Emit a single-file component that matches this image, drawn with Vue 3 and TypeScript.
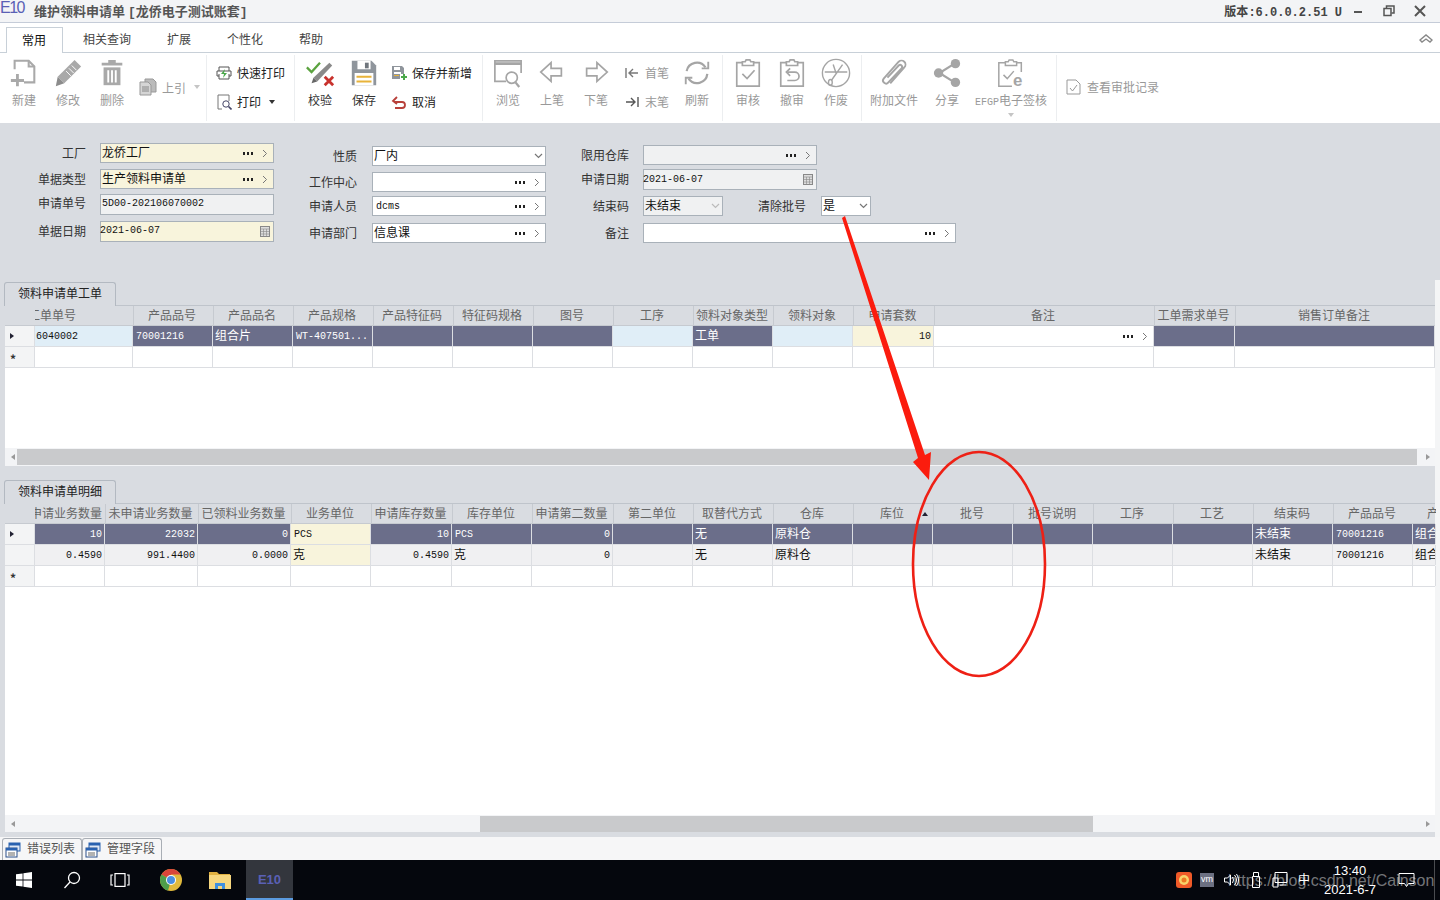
<script setup lang="ts">
interface Field {
  label: string
  value?: string
  tone: 'yellow' | 'white' | 'gray'
  kind?: 'lookup' | 'date' | 'select'
  mono?: boolean
  width: number
  labelWidth: number
}

interface Cell {
  text?: string
  cls?: string
}

interface Column {
  title: string
  w: number
  indent?: number
  sort?: boolean
}

interface Grid {
  name: string
  cls: string
  columns: Column[]
  rows: { head: string; cls: string; cells: Cell[] }[]
}

const formCols: { cls: string; rows: Field[][] }[] = [
  {
    cls: 'col-a',
    rows: [
      [{ label: '工厂', value: '龙侨工厂', tone: 'yellow', kind: 'lookup', width: 174, labelWidth: 66 }],
      [{ label: '单据类型', value: '生产领料申请单', tone: 'yellow', kind: 'lookup', width: 174, labelWidth: 66 }],
      [{ label: '申请单号', value: '5D00-202106070002', tone: 'gray', mono: true, width: 174, labelWidth: 66 }],
      [{ label: '单据日期', value: '2021-06-07', tone: 'yellow', kind: 'date', mono: true, width: 174, labelWidth: 66 }],
    ],
  },
  {
    cls: 'col-b',
    rows: [
      [{ label: '性质', value: '厂内', tone: 'white', kind: 'select', width: 174, labelWidth: 71 }],
      [{ label: '工作中心', tone: 'white', kind: 'lookup', width: 174, labelWidth: 71 }],
      [{ label: '申请人员', value: 'dcms', tone: 'white', kind: 'lookup', mono: true, width: 174, labelWidth: 71 }],
      [{ label: '申请部门', value: '信息课', tone: 'white', kind: 'lookup', width: 174, labelWidth: 71 }],
    ],
  },
  {
    cls: 'col-c',
    rows: [
      [{ label: '限用仓库', tone: 'gray', kind: 'lookup', width: 174, labelWidth: 69 }],
      [{ label: '申请日期', value: '2021-06-07', tone: 'gray', kind: 'date', mono: true, width: 174, labelWidth: 69 }],
      [
        { label: '结束码', value: '未结束', tone: 'gray', kind: 'select', width: 80, labelWidth: 69 },
        { label: '清除批号', value: '是', tone: 'white', kind: 'select', width: 50, labelWidth: 83 },
      ],
      [{ label: '备注', tone: 'white', kind: 'lookup', width: 313, labelWidth: 69 }],
    ],
  },
]

const m = 'mono'
const grids: Grid[] = [
  {
    name: '领料申请单工单',
    cls: 'grid-top',
    columns: [
      { title: '工单单号', w: 98, indent: -7 },
      { title: '产品品号', w: 80 },
      { title: '产品品名', w: 80 },
      { title: '产品规格', w: 80 },
      { title: '产品特征码', w: 80 },
      { title: '特征码规格', w: 80 },
      { title: '图号', w: 80 },
      { title: '工序', w: 80 },
      { title: '领料对象类型', w: 80 },
      { title: '领料对象', w: 80 },
      { title: '申请套数', w: 81 },
      { title: '备注', w: 220 },
      { title: '工单需求单号', w: 81 },
      { title: '销售订单备注', w: 200 },
    ],
    rows: [
      {
        head: 'arrow',
        cls: 'selected',
        cells: [
          { text: '6040002', cls: `${m} blue tight` },
          { text: '70001216', cls: m },
          { text: '组合片' },
          { text: 'WT-407501...', cls: m },
          {},
          {},
          {},
          { cls: 'blue' },
          { text: '工单' },
          { cls: 'blue' },
          { text: '10', cls: `${m} right yellow` },
          { cls: 'white lookup' },
          {},
          {},
        ],
      },
      { head: 'star', cls: '', cells: Array.from({ length: 14 }, () => ({})) },
    ],
  },
  {
    name: '领料申请单明细',
    cls: 'grid-bottom',
    columns: [
      { title: '申请业务数量', w: 70, indent: -5 },
      { title: '未申请业务数量', w: 93 },
      { title: '已领料业务数量', w: 93 },
      { title: '业务单位', w: 80 },
      { title: '申请库存数量', w: 81 },
      { title: '库存单位', w: 80 },
      { title: '申请第二数量', w: 81 },
      { title: '第二单位', w: 80 },
      { title: '取替代方式', w: 80 },
      { title: '仓库', w: 80 },
      { title: '库位', w: 80, sort: true },
      { title: '批号', w: 80 },
      { title: '批号说明', w: 80 },
      { title: '工序', w: 80 },
      { title: '工艺', w: 80 },
      { title: '结束码', w: 80 },
      { title: '产品品号', w: 80 },
      { title: '产品品名', w: 23, indent: 14 },
    ],
    rows: [
      {
        head: 'arrow',
        cls: 'selected',
        cells: [
          { text: '10', cls: `${m} right` },
          { text: '22032', cls: `${m} right` },
          { text: '0', cls: `${m} right` },
          { text: 'PCS', cls: `${m} yellow` },
          { text: '10', cls: `${m} right` },
          { text: 'PCS', cls: m },
          { text: '0', cls: `${m} right` },
          {},
          { text: '无' },
          { text: '原料仓' },
          {},
          {},
          {},
          {},
          {},
          { text: '未结束' },
          { text: '70001216', cls: m },
          { text: '组合片' },
        ],
      },
      {
        head: '',
        cls: 'alt',
        cells: [
          { text: '0.4590', cls: `${m} right` },
          { text: '991.4400', cls: `${m} right` },
          { text: '0.0000', cls: `${m} right` },
          { text: '克', cls: 'yellow' },
          { text: '0.4590', cls: `${m} right` },
          { text: '克' },
          { text: '0', cls: `${m} right` },
          {},
          { text: '无' },
          { text: '原料仓' },
          {},
          {},
          {},
          {},
          {},
          { text: '未结束' },
          { text: '70001216', cls: m },
          { text: '组合片' },
        ],
      },
      { head: 'star', cls: '', cells: Array.from({ length: 18 }, () => ({})) },
    ],
  },
]

const menuTabs = ['相关查询', '扩展', '个性化', '帮助']
</script>

<template>
  <div class="app">
    <!-- 标题栏 -->
    <header class="titlebar">
      <span class="logo">E10</span>
      <span class="doc-title">维护领料申请单 <i>[</i>龙侨电子测试账套<i>]</i></span>
      <span class="version">版本<i>:6.0.0.2.51 U</i></span>
      <div class="win-btns">
        <svg width="11" height="11" viewBox="0 0 11 11"><path d="M1 6h8" stroke="#555" stroke-width="2" /></svg>
        <svg width="12" height="12" viewBox="0 0 12 12" fill="none" stroke="#555" stroke-width="1.5"><rect x="1" y="3.5" width="7" height="7" /><path d="M3.5 3V1H11v7H8.5" /></svg>
        <svg width="12" height="12" viewBox="0 0 12 12"><path d="M1 1l10 10M11 1L1 11" stroke="#555" stroke-width="2" /></svg>
      </div>
    </header>

    <nav class="menubar">
      <span class="menu-tab active">常用</span>
      <span v-for="tab in menuTabs" :key="tab" class="menu-tab">{{ tab }}</span>
      <svg class="collapse" width="14" height="10" viewBox="0 0 14 10" fill="none" stroke="#888" stroke-width="1.4"><path d="M1 7l6-5 6 5-2 2-4-3-4 3z" /></svg>
    </nav>

    <!-- 功能区 -->
    <section class="ribbon">
      <div class="group g1">
        <div class="big off">
          <svg viewBox="0 0 32 32" fill="none" stroke="#a9a9a9" stroke-width="2.2"><path d="M6 12V3h15l6 6v17H16" /><path d="M21 3v6h6" /><path d="M9 17v13M2 24h14" stroke-width="3" /></svg>
          <span>新建</span>
        </div>
        <div class="big off">
          <svg viewBox="0 0 32 32"><path d="M23 2l7 7L12 27l-7-7z" fill="#a9a9a9" /><path d="M20 8l5 5M17 11l5 5M14 14l5 5" stroke="#fff" stroke-width="1" /><path d="M5 20l7 7-9 3z" fill="#8c8c8c" /></svg>
          <span>修改</span>
        </div>
        <div class="big off">
          <svg viewBox="0 0 32 32"><path d="M5 5h22v3H5zM12 2h8v3h-8z" fill="#a9a9a9" /><path d="M7 10h18v19H7z" fill="#a9a9a9" /><path d="M12 13v13M16 13v13M20 13v13" stroke="#fff" stroke-width="2" /></svg>
          <span>删除</span>
        </div>
        <div class="quote off">
          <svg width="18" height="18" viewBox="0 0 18 18"><path d="M6 1h8l3 3v10H6z" fill="#bbb" stroke="#999" /><path d="M1 4h8l3 3v10H1z" fill="#d5d5d5" stroke="#999" /><path d="M3 9h7M3 11h7M3 13h7" stroke="#888" /></svg>
          <span>上引</span>
          <i class="caret pale"></i>
        </div>
      </div>

      <div class="group g2">
        <div class="small">
          <svg viewBox="0 0 16 16" fill="none" stroke="#555"><path d="M3 6V2h10v4M3 11H1V6h14v5h-2M3 9v5h10V9" /><path d="M9 4L5 9h3l-1 4 4-5H8z" fill="#4aa84a" stroke="none" /></svg>
          <span>快速打印</span>
        </div>
        <div class="small">
          <svg viewBox="0 0 16 16" fill="none" stroke="#777"><path d="M6 15H2V1h11v6" /><circle cx="10" cy="10" r="3.2" stroke="#446" /><path d="M12.5 12.5l3 3" stroke="#446" stroke-width="1.6" /></svg>
          <span>打印</span>
          <i class="caret"></i>
        </div>
      </div>

      <div class="group g3">
        <div class="big">
          <svg viewBox="0 0 32 32" fill="none"><path d="M26 5l3 3-16 17-4-4z" fill="#8a8a8a" /><path d="M9 21l4 4-6 2z" fill="#666" /><path d="M2 10l5 5 9-10" stroke="#5ba33f" stroke-width="2.4" /><path d="M21 20l9 9M30 20l-9 9" stroke="#c8322d" stroke-width="3" /></svg>
          <span>校验</span>
        </div>
        <div class="big">
          <svg viewBox="0 0 32 32"><path d="M3 3h21l5 5v21H3z" fill="#8f959c" /><path d="M9 3h14v9H9z" fill="#fff" /><path d="M17 5h4v6h-4z" fill="#70767d" /><path d="M6 16h20v13H6z" fill="#fff" /><path d="M8 19h16v2H8zM8 24h16v2H8z" fill="#e8b33a" /></svg>
          <span>保存</span>
        </div>
        <div class="small-col">
          <div class="small">
            <svg viewBox="0 0 16 16"><path d="M1 1h10l2 2v6H9v5H1z" fill="#8f959c" /><path d="M3 2h6v3H3zM3 7h7v2H3z" fill="#fff" /><path d="M3 10h5v1H3z" fill="#e8b33a" /><path d="M10 12h6M13 9v6" stroke="#4aa84a" stroke-width="2" /></svg>
            <span>保存并新增</span>
          </div>
          <div class="small">
            <svg viewBox="0 0 16 16" fill="none" stroke="#b8403a" stroke-width="1.8"><path d="M3 8h8a3 3 0 0 1 0 6H4" /><path d="M6 3L2 7l4 3" /></svg>
            <span>取消</span>
          </div>
        </div>
      </div>

      <div class="group g4">
        <div class="big off">
          <svg viewBox="0 0 32 32" fill="none" stroke="#a5a5a5" stroke-width="1.8"><path d="M14 25H2V3h28v13" /><path d="M2 6h28" stroke-width="3" /><circle cx="20" cy="21" r="6" /><path d="M24 26l4 5" stroke-width="2.4" /></svg>
          <span>浏览</span>
        </div>
        <div class="big off">
          <svg viewBox="0 0 32 32" fill="none" stroke="#a5a5a5" stroke-width="1.8"><path d="M15 5L4 15l11 10v-6h11v-8H15z" /></svg>
          <span>上笔</span>
        </div>
        <div class="big off">
          <svg viewBox="0 0 32 32" fill="none" stroke="#a5a5a5" stroke-width="1.8"><path d="M17 5l11 10-11 10v-6H6v-8h11z" /></svg>
          <span>下笔</span>
        </div>
        <div class="small-col nav off">
          <div class="small">
            <svg viewBox="0 0 16 16" fill="none" stroke="#777" stroke-width="1.4"><path d="M2 3v10M14 8H6M9 4L5 8l4 4" /></svg>
            <span>首笔</span>
          </div>
          <div class="small">
            <svg viewBox="0 0 16 16" fill="none" stroke="#555" stroke-width="1.4"><path d="M14 3v10M2 8h8M7 4l4 4-4 4" /></svg>
            <span>末笔</span>
          </div>
        </div>
        <div class="big off">
          <svg viewBox="0 0 32 32" fill="none" stroke="#a5a5a5" stroke-width="2.4"><path d="M5 14a11 11 0 0 1 20-4" /><path d="M27 17a11 11 0 0 1-20 5" /><path d="M21 11h7V4M11 21H4v7" stroke-width="2" /></svg>
          <span>刷新</span>
        </div>
      </div>

      <div class="group g5">
        <div class="big off">
          <svg viewBox="0 0 32 32" fill="none" stroke="#a5a5a5" stroke-width="1.8"><path d="M10 5H4v25h24V5h-6" /><path d="M10 8V4h3l1-2h4l1 2h3v4z" /><path d="M10 17l5 5 8-9" /></svg>
          <span>审核</span>
        </div>
        <div class="big off">
          <svg viewBox="0 0 32 32" fill="none" stroke="#a5a5a5" stroke-width="1.8"><path d="M10 5H4v25h24V5h-6" /><path d="M10 8V4h3l1-2h4l1 2h3v4z" /><path d="M11 15h8a4 4 0 0 1 0 9h-8" /><path d="M14 11l-4 4 4 4" /></svg>
          <span>撤审</span>
        </div>
        <div class="big off">
          <svg viewBox="0 0 32 32" fill="none" stroke="#a5a5a5" stroke-width="1.5"><circle cx="16" cy="16" r="14.5" /><path d="M4 15h24M23 7L11 24M13 7l3 9" /><ellipse cx="10" cy="26" rx="2" ry="3" /></svg>
          <span>作废</span>
        </div>
      </div>

      <div class="group g6">
        <div class="big wide-a off">
          <svg viewBox="0 0 32 32" fill="none" stroke="#a5a5a5" stroke-width="2"><path d="M12 27L27 10a4 4 0 0 0-6-6L5 22a3 3 0 0 0 5 4L24 11a2 2 0 0 0-3-3L9 21" /></svg>
          <span>附加文件</span>
        </div>
        <div class="big wide-b off">
          <svg viewBox="0 0 32 32" fill="#a5a5a5"><path d="M24 6L8 16l16 10" fill="none" stroke="#a5a5a5" stroke-width="2.4" /><circle cx="25" cy="6" r="5" /><circle cx="7" cy="16" r="5" /><circle cx="25" cy="26" r="5" /></svg>
          <span>分享</span>
        </div>
        <div class="big wide-c off">
          <svg class="efgp-icon" viewBox="0 0 32 32" fill="none" stroke="#a5a5a5" stroke-width="1.6"><path d="M10 5H3v25h14M22 5h5v10" /><path d="M10 8V4h3l1-2h4l1 2h3v4z" /><path d="M8 18l4 4 7-8" /><text x="18" y="30" class="efgp-e">e</text></svg>
          <span><em>EFGP</em>电子签核</span>
          <i class="caret pale tiny"></i>
        </div>
      </div>

      <div class="group g7 off">
        <svg width="15" height="16" viewBox="0 0 15 16" fill="none" stroke="#999"><path d="M1 1h9l4 4v10H1z" /><path d="M4 9l2.5 3L11 6" /></svg>
        <span>查看审批记录</span>
      </div>
    </section>

    <!-- 单头表单 -->
    <section class="form">
      <div v-for="col in formCols" :key="col.cls" class="form-col" :class="col.cls">
        <div v-for="(row, ri) in col.rows" :key="ri" class="form-row">
          <template v-for="item in row" :key="item.label">
            <label :style="{ width: item.labelWidth + 'px' }">{{ item.label }}</label>
            <div class="field" :class="[item.tone, item.kind, { mono: item.mono }]" :style="{ width: item.width + 'px' }">
              <span class="value">{{ item.value }}</span>
              <template v-if="item.kind === 'lookup'">
                <svg class="dots" width="12" height="3" viewBox="0 0 12 3" fill="#222"><path d="M1 0h2v3H1zM5 0h2v3H5zM9 0h2v3H9z" /></svg>
                <svg width="6" height="9" viewBox="0 0 6 9" fill="none" stroke="#777"><path d="M1 1l3.5 3.5L1 8" /></svg>
              </template>
              <svg v-else-if="item.kind === 'date'" class="date-icon" width="10" height="11" viewBox="0 0 10 11" fill="#ddd" stroke="#888"><rect x=".5" y=".5" width="9" height="10" /><path d="M.5 3h9M.5 5.500h9M.5 8h9M3.500 3v7M6.500 3v7" stroke-width=".6" /></svg>
              <svg v-else-if="item.kind === 'select'" class="sel" width="9" height="6" viewBox="0 0 9 6" fill="none" stroke-width="1.2"><path d="M1 1l3.500 3.500L8 1" /></svg>
            </div>
          </template>
        </div>
      </div>
    </section>

    <!-- 单身表格 -->
    <section v-for="grid in grids" :key="grid.name" class="grid-wrap" :class="grid.cls">
      <div class="tab-strip"><span class="grid-tab">{{ grid.name }}</span></div>
      <div class="grid-head">
        <div class="row-head"></div>
        <div v-for="col in grid.columns" :key="col.title" class="h-cell" :class="{ clip: col.indent !== undefined }" :style="{ width: col.w + 'px' }">
          <span :style="col.indent !== undefined ? { marginLeft: col.indent + 'px' } : undefined">{{ col.title }}</span>
          <i v-if="col.sort" class="sort"></i>
        </div>
      </div>
      <div class="grid-body">
        <div v-for="(row, ri) in grid.rows" :key="ri" class="g-row" :class="row.cls">
          <div class="row-head">
            <i v-if="row.head === 'arrow'" class="arrow"></i>
            <span v-else-if="row.head === 'star'" class="star">*</span>
          </div>
          <div v-for="(cell, ci) in row.cells" :key="ci" class="g-cell" :class="cell.cls" :style="{ width: grid.columns[ci]!.w + 'px' }">
            <span>{{ cell.text }}</span>
            <template v-if="cell.cls?.includes('lookup')">
              <svg class="dots" width="12" height="3" viewBox="0 0 12 3" fill="#222"><path d="M1 0h2v3H1zM5 0h2v3H5zM9 0h2v3H9z" /></svg>
              <svg width="6" height="9" viewBox="0 0 6 9" fill="none" stroke="#777"><path d="M1 1l3.500 3.500L1 8" /></svg>
            </template>
          </div>
        </div>
      </div>
      <div class="scrollbar">
        <i class="sb-left"></i>
        <div class="track"><div class="thumb"></div></div>
        <i class="sb-right"></i>
      </div>
    </section>

    <!-- 底部页签 -->
    <footer class="bottom-tabs">
      <div v-for="t in ['错误列表', '管理字段']" :key="t" class="bottom-tab">
        <svg width="17" height="16" viewBox="0 0 17 16"><rect x="4" y="1" width="11" height="8" fill="#dfe9f7" stroke="#2a62b0" /><rect x="4" y="1" width="11" height="2.500" fill="#2a62b0" /><rect x="1" y="6" width="11" height="9" fill="#fff" stroke="#2a4f8a" /><rect x="1" y="6" width="11" height="2.500" fill="#2a62b0" /><path d="M3 11h7M3 13h7" stroke="#666" /></svg>
        <span>{{ t }}</span>
      </div>
    </footer>

    <!-- 任务栏 -->
    <div class="taskbar">
      <svg class="tb-win" width="16" height="16" viewBox="0 0 16 16" fill="#fff"><path d="M0 2.300l6.600-.9v6.200H0zM7.400 1.300L16 0v7.600H7.400zM0 8.400h6.600v6.200L0 13.700zM7.400 8.400H16V16l-8.600-1.300z" /></svg>
      <svg class="tb-search" width="18" height="18" viewBox="0 0 18 18" fill="none" stroke="#fff" stroke-width="1.300"><circle cx="11" cy="7" r="5.500" /><path d="M7 11l-5.500 6" /></svg>
      <svg class="tb-view" width="20" height="14" viewBox="0 0 20 14" fill="none" stroke="#fff" stroke-width="1.200"><rect x="5" y=".6" width="10" height="12.800" /><path d="M3 2H1v10h2M17 2h2v10h-2" /></svg>
      <svg class="tb-chrome" width="22" height="22" viewBox="0 0 22 22"><circle cx="11" cy="11" r="11" fill="#e0b93c" /><path d="M11 11L1.500 5.500A11 11 0 0 1 20.500 5.500H11z" fill="#d9453a" /><path d="M11 11L1.500 5.500A11 11 0 0 0 8 21.600z" fill="#4e9e4a" /><circle cx="11" cy="11" r="5" fill="#fff" /><circle cx="11" cy="11" r="4" fill="#4a8fe0" /></svg>
      <svg class="tb-folder" width="22" height="18" viewBox="0 0 22 18"><path d="M0 1h8l2 2h11v3H0z" fill="#e0b040" /><path d="M0 4h22v14H0z" fill="#f6d67e" /><path d="M6 18v-6h10v6h-3v-3H9v3z" fill="#3f8fdf" /></svg>
      <div class="tb-app"><span>E10</span></div>
      <div class="tray">
        <svg class="t-orange" width="16" height="16" viewBox="0 0 16 16"><rect width="16" height="16" rx="3" fill="#f05a28" /><circle cx="8" cy="8" r="5" fill="#f9d36a" /><circle cx="8" cy="8" r="2.500" fill="#ee7a24" /></svg>
        <span class="t-vm">vm</span>
        <svg class="t-vol" width="17" height="14" viewBox="0 0 16 14" fill="none" stroke="#fff"><path d="M1 5h3l3-3v10L4 9H1zM9 4q2 3 0 6M11 2q4 5 0 10M13 1q4 6 0 12" /></svg>
        <svg class="t-usb" width="8" height="16" viewBox="0 0 8 16" fill="none" stroke="#fff"><path d="M1.500.5h5v4h-5zM.5 4.500h7v11h-7z" /></svg>
        <svg class="t-net" width="16" height="16" viewBox="0 0 16 16" fill="none" stroke="#fff"><path d="M3 .5h12v10H3zM1 6h5v9H1zM8 13h6" /></svg>
        <span class="t-ime">中</span>
        <div class="clock"><span>13:40</span><span>2021-6-7</span></div>
        <svg class="t-note" width="17" height="15" viewBox="0 0 16 15" fill="none" stroke="#fff"><path d="M.5.500h15v10H10l-2 3-2-3H.5z" /></svg>
      </div>
      <i class="tb-edge"></i>
      <span class="watermark">https://blog.csdn.net/Cainson</span>
    </div>

    <!-- 红色标注 -->
    <svg class="marks" width="1440" height="900" viewBox="0 0 1440 900" fill="none">
      <path d="M842 218L845 216 925 455 931 452 929 480 913 462 918 458z" fill="#fb1c0e" />
      <ellipse cx="979" cy="564" rx="66" ry="112" stroke="#ee2015" stroke-width="2.600" />
    </svg>
  </div>
</template>

<style scoped>
.app {
  position: relative;
  display: flex;
  flex-direction: column;
  width: 1440px;
  height: 900px;
  overflow: hidden;
  background: #f4f5f6;
  font-family: 'Noto Sans CJK SC', 'Liberation Sans', sans-serif;
  font-size: 12px;
  color: #222;
}

.app i {
  font-style: normal;
}

.titlebar {
  flex: none;
  display: flex;
  align-items: center;
  height: 23px;
  box-sizing: border-box;
  background: #f3f4f6;
  border-bottom: 1px solid #c5ccd8;
}

.logo {
  align-self: flex-start;
  width: 34px;
  font-size: 16px;
  line-height: 15px;
  letter-spacing: -1.5px;
  color: #5a60b5;
  font-family: 'Liberation Sans', sans-serif;
}

.doc-title {
  flex: 1;
  padding-bottom: 2px;
  font-size: 13px;
  font-weight: 700;
  color: #555;
}

.doc-title i {
  font-family: 'Liberation Mono', monospace;
}

.version {
  font-weight: 700;
  color: #444;
  font-size: 12px;
}

.version i {
  font-family: 'Liberation Mono', monospace;
  font-weight: 700;
}

.win-btns {
  display: flex;
  align-items: center;
  gap: 19px;
  padding: 0 14px 0 11px;
}

.menubar {
  flex: none;
  position: relative;
  display: flex;
  align-items: flex-end;
  height: 30px;
  padding-left: 6px;
  background: #fff;
  border-bottom: 1px solid #c8d0d8;
  box-sizing: border-box;
}

.menu-tab {
  display: flex;
  align-items: center;
  box-sizing: border-box;
  height: 25px;
  padding: 0 18px 3px;
  color: #444;
  white-space: nowrap;
}

.menu-tab.active {
  width: 57px;
  padding: 0 15px 3px;
  margin-right: 2px;
  margin-bottom: -1px;
  height: 26px;
  border: 1px solid #c8d0d8;
  border-bottom: none;
  background: #fff;
  color: #111;
}

.collapse {
  position: absolute;
  top: 10px;
  right: 7px;
}

.ribbon {
  flex: none;
  display: flex;
  height: 70px;
  background: #fff;
}

.group {
  flex: none;
  display: flex;
  box-sizing: border-box;
  border-right: 1px solid #eceef0;
  margin: 2px 0 2px;
}

.g1 {
  width: 207px;
  padding-left: 2px;
}

.g2 {
  width: 88px;
  flex-direction: column;
  justify-content: space-between;
  padding: 9px 0 10px 9px;
}

.g3 {
  width: 188px;
  padding-left: 3px;
}

.g4 {
  width: 240px;
  padding-left: 3px;
}

.g5 {
  width: 139px;
  padding-left: 3px;
}

.g6 {
  width: 195px;
}

.g7 {
  width: auto;
  border: none;
  align-items: center;
  gap: 6px;
  padding-left: 9px;
  margin-top: -1px;
  color: #999;
}

.big {
  flex: none;
  position: relative;
  display: flex;
  flex-direction: column;
  align-items: center;
  width: 44px;
  padding-top: 3px;
  color: #333;
}

.big svg {
  width: 30px;
  height: 30px;
}

.big .efgp-icon {
  overflow: visible;
}

.big span {
  margin-top: 3px;
  line-height: 18px;
  white-space: nowrap;
}

.off,
.off .small span {
  color: #999;
}

.wide-a {
  width: 64px;
}

.wide-b {
  width: 42px;
}

.wide-c {
  width: 86px;
}

.wide-c em {
  font-style: normal;
  font-family: 'Liberation Mono', monospace;
  font-size: 10px;
}

.efgp-e {
  font-family: 'Liberation Sans', sans-serif;
  font-size: 18px;
  font-weight: 700;
  fill: #a5a5a5;
  stroke: none;
}

.quote {
  display: flex;
  align-items: center;
  align-self: center;
  gap: 5px;
  padding-left: 5px;
  margin-top: -2px;
}

.caret {
  display: inline-block;
  width: 0;
  height: 0;
  margin-left: 3px;
  border: 3px solid transparent;
  border-top: 4px solid #333;
  border-bottom: none;
}

.caret.pale {
  border-top-color: #c5c5c5;
}

.caret.tiny {
  position: absolute;
  left: 40px;
  bottom: 4px;
  margin: 0;
}

.small {
  display: flex;
  align-items: center;
  height: 18px;
  gap: 5px;
  color: #222;
  white-space: nowrap;
}

.small svg {
  flex: none;
  width: 16px;
  height: 16px;
}

.small span {
  padding-bottom: 2px;
}

.small-col {
  display: flex;
  flex-direction: column;
  justify-content: space-between;
  padding: 9px 0 10px 5px;
}

.nav {
  width: 57px;
  box-sizing: border-box;
  padding-left: 6px;
}

.form {
  flex: none;
  display: flex;
  height: 157px;
  padding-left: 20px;
  box-sizing: border-box;
  background: #d9dce1;
}

.form-col {
  flex: none;
}

.col-a {
  width: 266px;
  padding-top: 20px;
}

.col-b {
  width: 274px;
  padding-top: 23px;
}

.col-c {
  padding-top: 22px;
}

.form-row {
  display: flex;
  align-items: center;
  height: 20px;
}

.col-a .form-row:nth-child(2) {
  margin-top: 6px;
}

.col-a .form-row:nth-child(3) {
  margin-top: 5px;
  height: 21px;
}

.col-a .form-row:nth-child(4) {
  margin-top: 6px;
  height: 21px;
}

.col-b .form-row:nth-child(2) {
  margin-top: 6px;
}

.col-b .form-row:nth-child(3) {
  margin-top: 4px;
}

.col-b .form-row:nth-child(4) {
  margin-top: 7px;
}

.col-c .form-row:nth-child(2) {
  margin-top: 4px;
  height: 21px;
}

.col-c .form-row:nth-child(3) {
  margin-top: 6px;
}

.col-c .form-row:nth-child(4) {
  margin-top: 7px;
}

.form-row label {
  flex: none;
  margin-right: 14px;
  padding-bottom: 2px;
  text-align: right;
  color: #333;
}

.col-a .form-row:nth-child(3) label {
  padding-bottom: 5px;
}

.col-b .form-row label {
  margin-right: 15px;
}

.col-c .form-row label + .field + label {
  margin-right: 15px;
}

.field {
  flex: none;
  display: flex;
  align-items: center;
  box-sizing: border-box;
  height: 100%;
  padding: 0 5px 0 1px;
  border: 1px solid #a9b1b9;
  color: #111;
}

.field.yellow {
  background: #f8f4dc;
}

.field.white {
  background: #fff;
}

.field.gray {
  background: #f0f1f2;
}

.value {
  flex: 1;
  padding-bottom: 4px;
  white-space: nowrap;
}

.field.mono .value {
  padding-bottom: 0;
  font-family: 'Liberation Mono', monospace;
  font-size: 10px;
}

.col-a .field.mono .value {
  padding-bottom: 2px;
}

.col-b .field.mono .value {
  padding-left: 2px;
}

.field.date .value {
  margin-left: -2px;
}

.dots {
  flex: none;
  margin-right: 8px;
}

.date-icon {
  margin-right: -2px;
}

.sel {
  margin-right: -3px;
  stroke: #777;
}

.gray .sel {
  stroke: #bbb;
}

.grid-wrap {
  flex: none;
  display: flex;
  flex-direction: column;
  box-sizing: border-box;
  padding-left: 5px;
  border-right: 5px solid #f4f5f6;
  background: #d9dce1;
}

.grid-top {
  height: 186px;
  padding-top: 2px;
}

.grid-bottom {
  height: 371px;
  padding-top: 14px;
  padding-bottom: 5px;
}

.tab-strip {
  flex: none;
  height: 24px;
  box-sizing: border-box;
  border-bottom: 1px solid #bfc4cb;
  margin-left: -1px;
}

.grid-tab {
  display: flex;
  align-items: center;
  justify-content: center;
  box-sizing: border-box;
  width: 112px;
  height: 24px;
  padding-bottom: 5px;
  border: 1px solid #b3b9c1;
  border-bottom: none;
  border-radius: 3px 3px 0 0;
  background: #d9dce1;
  color: #222;
}

.grid-head {
  flex: none;
  display: flex;
  height: 20px;
  box-sizing: border-box;
  border-bottom: 1px solid #c6cad0;
  color: #666;
}

.row-head {
  flex: none;
  display: flex;
  align-items: center;
  box-sizing: border-box;
  width: 30px;
  padding-left: 5px;
  border-right: 1px solid #dcdee2;
}

.grid-head .row-head {
  border-right: none;
}

.h-cell {
  flex: none;
  position: relative;
  display: flex;
  align-items: center;
  justify-content: center;
  box-sizing: border-box;
  overflow: hidden;
  padding: 0 3px 2px 0;
  white-space: nowrap;
  border-left: 1px solid #c6cad0;
}

.h-cell.clip {
  justify-content: flex-start;
  padding-right: 0;
  border-left: none;
}

.sort {
  position: absolute;
  right: 5px;
  top: 8px;
  border: 3px solid transparent;
  border-bottom: 4px solid #223;
  border-top: none;
}

.grid-body {
  flex: 1;
  background: #fff;
}

.g-row {
  display: flex;
  height: 21px;
  box-sizing: border-box;
  border-bottom: 1px solid #dcdee2;
  background: #fff;
}

.g-row .row-head {
  background: #f3f4f5;
}

.g-row .star {
  margin-top: 3px;
  font-size: 12px;
  font-weight: 700;
  color: #333;
}

.arrow {
  border: 3px solid transparent;
  border-left: 4px solid #223;
  border-right: none;
}

.g-cell {
  flex: none;
  display: flex;
  align-items: center;
  box-sizing: border-box;
  overflow: hidden;
  padding: 0 2px 0 2px;
  white-space: nowrap;
  border-right: 1px solid #dcdee2;
  color: #111;
}

.g-cell > span {
  flex: 1;
  padding-bottom: 3px;
}

.selected .g-cell {
  background: #6b6e8a;
  color: #fff;
  border-right-color: #dcdee2;
}

.alt .g-cell {
  background: #f0f0f2;
}

.g-cell.mono {
  padding-left: 3px;
  font-family: 'Liberation Mono', monospace;
  font-size: 10px;
}

.g-cell.mono > span {
  padding-bottom: 0;
}

.g-cell.tight {
  padding-left: 1px;
}

.g-cell.right {
  text-align: right;
}

.g-cell.lookup {
  padding-right: 5px;
}

.selected .g-cell.blue {
  background: #e0eef7;
  color: #111;
}

.selected .g-cell.yellow,
.alt .g-cell.yellow {
  background: #f8f4dc;
  color: #111;
}

.selected .g-cell.white {
  background: #fff;
}

.scrollbar {
  flex: none;
  display: flex;
  align-items: center;
  height: 18px;
  background: #f3f4f6;
}

.track {
  flex: 1;
  height: 16px;
  margin: 0 9px 0 0;
}

.thumb {
  height: 100%;
  background: #c9cacc;
}

.grid-top .track {
  margin-left: 2px;
}

.grid-bottom .track {
  margin-left: 465px;
}

.grid-bottom .thumb {
  width: 613px;
}

.sb-left {
  margin-left: 6px;
  border: 3px solid transparent;
  border-right: 4px solid #999;
  border-left: none;
}

.sb-right {
  margin-right: 5px;
  border: 3px solid transparent;
  border-left: 4px solid #999;
  border-right: none;
}

.grid-bottom .scrollbar {
  height: 17px;
}

.bottom-tabs {
  flex: 1;
  display: flex;
  align-items: flex-end;
  padding-left: 2px;
  background: #f6f6f7;
}

.bottom-tab {
  display: flex;
  align-items: center;
  gap: 5px;
  box-sizing: border-box;
  width: 80px;
  height: 22px;
  padding-left: 2px;
  border: 1px solid #a9aeb5;
  border-bottom: none;
  border-radius: 3px 3px 0 0;
  color: #555;
}

.bottom-tab span {
  padding-bottom: 4px;
}

.taskbar {
  flex: none;
  position: relative;
  display: flex;
  align-items: center;
  height: 40px;
  background: #05070d;
  color: #fff;
}

.tb-win {
  margin-left: 16px;
}

.tb-search {
  margin-left: 31px;
}

.tb-view {
  margin-left: 29px;
}

.tb-chrome {
  margin-left: 30px;
}

.tb-folder {
  margin-left: 27px;
}

.tb-app {
  display: flex;
  align-items: center;
  justify-content: center;
  box-sizing: border-box;
  width: 47px;
  height: 40px;
  margin-left: 15px;
  background: #33363d;
  border-bottom: 2px solid #5b9be0;
  color: #5a60b5;
  font-family: 'Liberation Sans', sans-serif;
  font-size: 13px;
  font-weight: 700;
}

.tray {
  display: flex;
  align-items: center;
  margin-left: auto;
  padding-right: 25px;
}

.t-vm {
  display: flex;
  justify-content: center;
  width: 14px;
  height: 14px;
  margin-left: 8px;
  background: #6c7082;
  font-family: 'Liberation Sans', sans-serif;
  font-size: 9px;
  line-height: 13px;
}

.t-vol {
  margin-left: 9px;
}

.t-usb {
  margin-left: 12px;
}

.t-net {
  margin-left: 12px;
}

.t-ime {
  margin-left: 10px;
  margin-right: 4px;
  padding-bottom: 3px;
  font-size: 12px;
}

.clock {
  display: flex;
  flex-direction: column;
  align-items: center;
  width: 72px;
  font-family: 'Liberation Sans', sans-serif;
  font-size: 13px;
  line-height: 19px;
}

.t-note {
  margin-left: 12px;
}

.tb-edge {
  position: absolute;
  right: 5px;
  top: 0;
  width: 1px;
  height: 40px;
  background: #4a4c50;
}

.watermark {
  position: absolute;
  left: 1228px;
  top: 10px;
  font-family: 'Liberation Sans', sans-serif;
  font-size: 16px;
  line-height: 22px;
  color: rgba(255, 255, 255, 0.45);
  white-space: nowrap;
}

.marks {
  position: absolute;
  top: 0;
  left: 0;
  pointer-events: none;
}
</style>
